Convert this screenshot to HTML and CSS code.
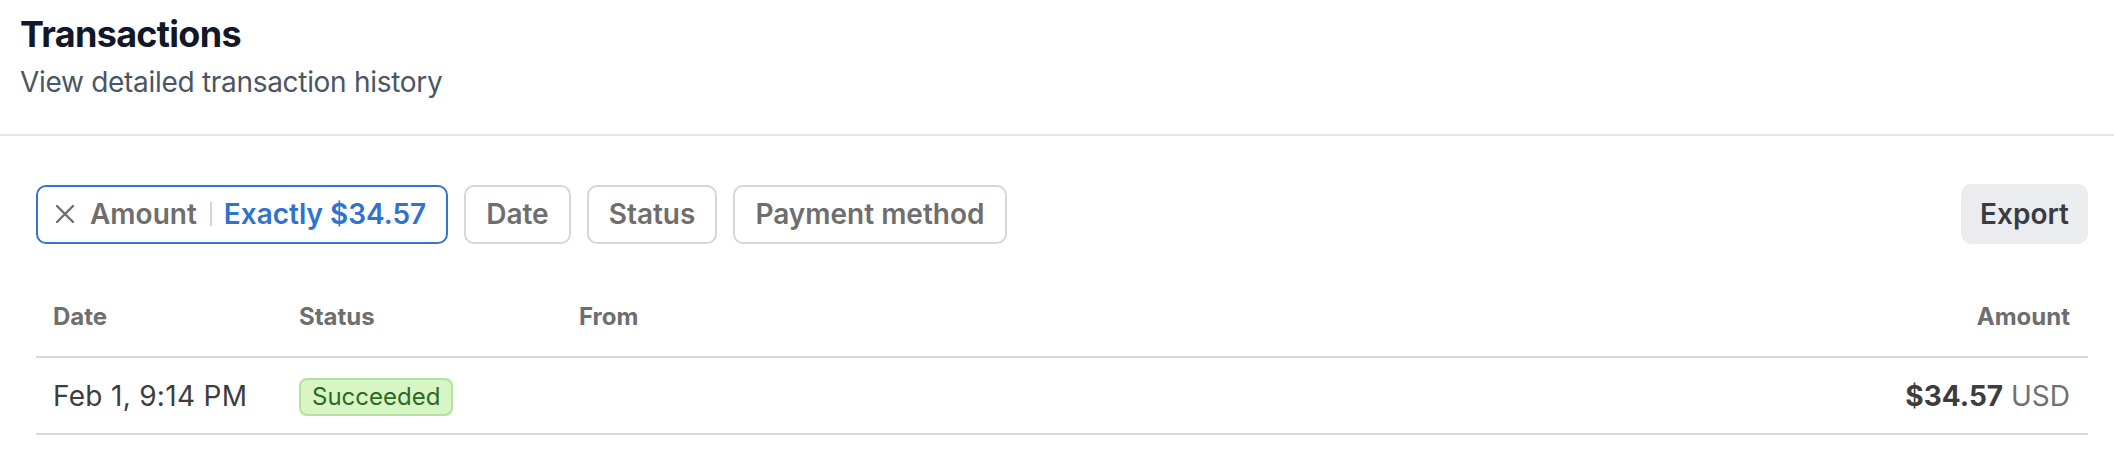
FILE: index.html
```html
<!DOCTYPE html>
<html lang="en">
<head>
<meta charset="utf-8">
<title>Transactions</title>
<link rel="stylesheet" href="styles.css">
</head>
<body>
<div class="page">
  <header class="page-header">
    <h1 class="page-title">Transactions</h1>
    <p class="page-subtitle">View detailed transaction history</p>
  </header>
  <main class="content">
    <div class="toolbar">
      <div class="filters">
        <button class="chip chip-active" type="button">
          <svg class="chip-x" viewBox="0 0 20 20" width="20" height="20" aria-hidden="true">
            <path d="M2 2 L18 18 M18 2 L2 18" fill="none" stroke="currentColor" stroke-width="2.4" stroke-linecap="round"/>
          </svg>
          <span class="chip-label">Amount</span>
          <span class="chip-sep"></span>
          <span class="chip-value">Exactly $34.57</span>
        </button>
        <button class="chip" type="button">Date</button>
        <button class="chip" type="button">Status</button>
        <button class="chip" type="button">Payment method</button>
      </div>
      <button class="export-btn" type="button">Export</button>
    </div>
    <table class="tx-table">
      <colgroup>
        <col class="col-date">
        <col class="col-status">
        <col class="col-from">
        <col class="col-amount">
      </colgroup>
      <thead>
        <tr>
          <th>Date</th>
          <th>Status</th>
          <th>From</th>
          <th class="num">Amount</th>
        </tr>
      </thead>
      <tbody>
        <tr>
          <td>Feb 1, 9:14 PM</td>
          <td><span class="badge badge-success">Succeeded</span></td>
          <td></td>
          <td class="num"><strong class="amount">$34.57</strong> <span class="currency">USD</span></td>
        </tr>
      </tbody>
    </table>
  </main>
</div>
</body>
</html>
```
FILE: styles.css
```css
* { box-sizing: border-box; }

html, body {
  margin: 0;
  padding: 0;
  background: #ffffff;
}

body {
  font-family: Inter, "Noto Sans", "Liberation Sans", sans-serif;
  color: #3d3d3d;
}

.page-header {
  padding: 12px 20px 32px 20px;
  border-bottom: 2px solid #e5e5ea;
}

.page-title {
  margin: 0;
  font-size: 36px;
  line-height: 44px;
  font-weight: 700;
  color: #111827;
  letter-spacing: -0.7px;
}

.page-subtitle {
  margin: 6px 0 0 0;
  font-size: 28px;
  line-height: 40px;
  font-weight: 400;
  color: #4b5563;
  letter-spacing: -0.3px;
}

.content {
  padding: 48px 26px 0 36px;
}

.toolbar {
  display: flex;
  align-items: center;
  justify-content: space-between;
  margin-bottom: 34px;
}

.filters {
  display: flex;
  align-items: center;
  gap: 16px;
}

.chip {
  display: inline-flex;
  align-items: center;
  height: 59px;
  padding: 0 20px;
  border: 2px solid #d6d6d6;
  border-radius: 10px;
  background: #ffffff;
  font-family: inherit;
  font-size: 28px;
  font-weight: 600;
  color: #6e6e6e;
  cursor: pointer;
}

.chip-active {
  border-color: #3474d0;
  padding: 0 20px 0 17px;
}

.chip-x {
  width: 20px;
  height: 20px;
  color: #6e6e6e;
  margin-right: 15px;
  flex: none;
}

.chip-sep {
  width: 2px;
  height: 24px;
  background: #d4d4d4;
  margin: 0 12px 0 13px;
}

.chip-value {
  color: #2f72d0;
}

.export-btn {
  height: 60px;
  padding: 0 19px;
  border: none;
  border-radius: 10px;
  background: #ebecf0;
  font-family: inherit;
  font-size: 28px;
  font-weight: 600;
  color: #3a3b40;
  cursor: pointer;
}

.tx-table {
  width: 100%;
  border-collapse: collapse;
  table-layout: fixed;
}

.col-date { width: 246px; }
.col-status { width: 280px; }
.col-amount { width: 400px; }

.tx-table th {
  text-align: left;
  font-size: 24px;
  line-height: 30px;
  font-weight: 700;
  color: #6e6e6e;
  padding: 24px 18px 24px 17px;
  border-bottom: 2px solid #d9d9d9;
}

.tx-table td {
  font-size: 28px;
  line-height: 40px;
  color: #3d3d3d;
  padding: 17px 18px 17px 17px;
  border-bottom: 2px solid #d9d9d9;
  vertical-align: middle;
  white-space: nowrap;
}

.tx-table td:first-child {
  letter-spacing: 0.3px;
}

.tx-table .num {
  text-align: right;
}

.badge {
  display: inline-flex;
  align-items: center;
  height: 38px;
  padding: 0 11px;
  border-radius: 8px;
  font-size: 24px;
  line-height: 1;
  vertical-align: middle;
}

.badge-success {
  background: #d8f5c6;
  border: 2px solid #b4e2a0;
  color: #2b6a22;
}

.amount {
  font-weight: 700;
  color: #3d3d3d;
}

.currency {
  color: #707070;
}
```
